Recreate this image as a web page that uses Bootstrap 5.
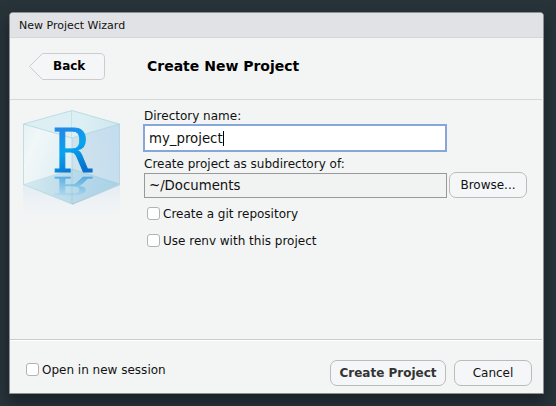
<!DOCTYPE html>
<html lang="en">
<head>
<meta charset="utf-8">
<meta name="viewport" content="width=device-width, initial-scale=1">
<title>New Project Wizard</title>
<link href="https://cdn.jsdelivr.net/npm/bootstrap@5.3.0/dist/css/bootstrap.min.css" rel="stylesheet">
<style>
body{background:#283339;font-family:"DejaVu Sans",sans-serif;font-size:12px;line-height:14px;color:#111;height:406px;overflow:hidden;padding:12px 12px 12px 9px}
.wizard{width:535px;height:382px;border:1px solid #8c9092;border-radius:4px 4px 0 0;background:#f3f5f5;box-shadow:0 8px 14px rgba(10,14,24,.5);overflow:hidden}
.wizard-title{height:25px;background:#e1e2e6;border-bottom:1px solid #d4d6d8;font-size:11px;padding:1px 0 0 9px}
.wizard-head{height:62px;border-bottom:1px solid #d4d6d8;margin-right:1px}
.back-btn{width:76px;height:27px;margin:-5px 0 0 19px;padding:0;border:0;background:none;color:#000}
.back-btn span{left:24px;top:6px;line-height:14px}
.wizard-head h1{font-size:14px;line-height:18px;margin:-5px 0 0 42px;color:#000}
.wizard-body{height:239px}
.art{width:125px;height:135px}
.fields{padding:8px 0 0 9px}
.fields label{line-height:16px}
.field{border-radius:0;width:303px;height:25px;border:1px solid #999;background:#f1f3f3;font-size:13.3px;line-height:16px;padding:1px 4px 0;color:#111}
.field-active{width:304px;height:28px;margin-left:-1px;border:2px solid #87a7dc;background:#fff}
.caret{width:1px;height:15px;background:#000}
.push{height:26px;border:1px solid #bbb;border-radius:7px;background:#f5f6f8;font-size:12px;line-height:14px;padding:0;color:#111}
.form-check-input.tick{width:13px;height:13px;margin:0;border:1px solid #b3b3b3;border-radius:3px;background-color:#fff}
.wizard-foot{height:54px;border-top:1px solid #ccc;box-shadow:inset 0 1px #fff;padding:20px 10px 0 16px;margin-right:1px}
#browse{width:78px;margin-left:2px}
#create{width:116px;color:#333}
#cancel{width:78px;margin-left:8px}
.options{margin:2px 0 0 3px}
.opt{gap:3px;height:27px}
.session{gap:3px;height:19px}
</style>
</head>
<body>
<main class="wizard d-flex flex-column">
  <div class="wizard-title d-flex align-items-center flex-shrink-0">New Project Wizard</div>
  <header class="wizard-head d-flex align-items-center flex-shrink-0">
    <button class="back-btn position-relative flex-shrink-0 fw-bold">
      <svg class="d-block" width="76" height="27" viewBox="0 0 76 27"><path d="M.5 13.500 13.500.5H71Q75.500.5 75.500 5V22Q75.500 26.500 71 26.500H13.500Z" fill="#f5f6f8" stroke="#ccc"/></svg>
      <span class="position-absolute">Back</span>
    </button>
    <h1 class="fw-bold">Create New Project</h1>
  </header>
  <section class="wizard-body d-flex flex-shrink-0">
    <svg class="art flex-shrink-0" viewBox="0 0 125 135" aria-hidden="true">
      <defs>
        <linearGradient id="left" x1="0" x2="1" y1="0" y2=".5"><stop stop-color="#e4f1f5"/><stop offset=".3" stop-color="#f2f7f8"/><stop offset="1" stop-color="#deeff4"/></linearGradient>
        <linearGradient id="right" x1="0" x2="1" y1=".3" y2="0"><stop stop-color="#d0e3ed"/><stop offset="1" stop-color="#c2dcef"/></linearGradient>
        <linearGradient id="top" x1="0" x2="1"><stop stop-color="#deeff3"/><stop offset=".6" stop-color="#dceff4"/><stop offset="1" stop-color="#cfe7ef"/></linearGradient>
        <linearGradient id="floor" x1="0" x2="1"><stop stop-color="#d7eaf0"/><stop offset=".5" stop-color="#b9dbea"/><stop offset="1" stop-color="#a9d1e7"/></linearGradient>
        <linearGradient id="ink" x1=".2" x2=".5" y1="0" y2="1"><stop offset=".18" stop-color="#2189e6"/><stop offset=".5" stop-color="#08a3ef"/><stop offset=".85" stop-color="#0670cd"/></linearGradient>
        <linearGradient id="echo" x1="0" x2="0" y1="77" y2="95" gradientUnits="userSpaceOnUse"><stop stop-color="#fff"/><stop offset="1" stop-color="#fff" stop-opacity=".15"/></linearGradient>
        <linearGradient id="mist" x1="0" x2="0" y1="80" y2="119" gradientUnits="userSpaceOnUse"><stop stop-color="#d9e8f2" stop-opacity=".8"/><stop offset="1" stop-color="#e9eff6" stop-opacity="0"/></linearGradient>
        <mask id="fade" maskUnits="userSpaceOnUse" x="0" y="70" width="125" height="30"><path d="M0 76H125V98H0Z" fill="url(#echo)"/></mask>
      </defs>
      <path d="M13 85 62 104 110 85V121H13Z" fill="url(#mist)"/>
      <path d="M13.500 24 62 38V69L13.500 84.500Z" fill="url(#left)"/>
      <path d="M62 38 109.500 24V84L62 69Z" fill="url(#right)"/>
      <path d="M13.500 24 62 10.500 109.500 24 62 38Z" fill="url(#top)"/>
      <path d="M13.500 84.500 62 69 109.500 84 62 104Z" fill="url(#floor)"/>
      <g fill="none" stroke="#94c8ce" stroke-opacity=".65" stroke-width=".8">
        <path d="M13.500 84.500V24L62 10.500 109.500 24V84L62 104ZM13.500 24 62 38 109.500 24M62 38V104"/>
        <path d="M61.500 11V38" stroke-opacity=".4"/>
        <path d="M13.500 84.500 62 69" stroke-opacity=".25"/>
        <path d="M62 69 109.500 84" stroke="#8fbfdc"/>
      </g>
      <path d="M62 104.500 110 84.700" stroke="#9dbad0" stroke-opacity=".6" fill="none"/>
      <g font-family="'DejaVu Serif',serif" font-size="59" fill="url(#ink)">
        <text id="glyph" transform="translate(42.300 71.500) scale(.87 1)" stroke="url(#ink)" stroke-width=".9">R</text>
      </g>
      <g mask="url(#fade)" opacity=".6"><use href="#glyph" transform="matrix(1 0 0 -.41 0 106.700)" font-family="'DejaVu Serif',serif" font-size="59" fill="#1e93de"/></g>
    </svg>
    <div class="fields d-flex flex-column">
      <label for="dir">Directory name:</label>
      <div id="dir" class="field field-active d-flex align-items-center"><span>my_project</span><i class="caret"></i></div>
      <label class="mt-1">Create project as subdirectory of:</label>
      <div class="d-flex align-items-center">
        <div class="field d-flex align-items-center">~/Documents</div>
        <button class="push btn" id="browse">Browse...</button>
      </div>
      <div class="options">
        <div class="opt d-flex align-items-center"><input class="form-check-input tick" type="checkbox" id="git"><label for="git">Create a git repository</label></div>
        <div class="opt d-flex align-items-center"><input class="form-check-input tick" type="checkbox" id="renv"><label for="renv">Use renv with this project</label></div>
      </div>
    </div>
  </section>
  <footer class="wizard-foot d-flex align-items-start flex-shrink-0">
    <div class="d-flex align-items-center session"><input class="form-check-input tick" type="checkbox" id="session"><label for="session">Open in new session</label></div>
    <button class="push btn fw-bold ms-auto" id="create">Create Project</button>
    <button class="push btn" id="cancel">Cancel</button>
  </footer>
</main>
<script src="https://cdn.jsdelivr.net/npm/bootstrap@5.3.0/dist/js/bootstrap.bundle.min.js"></script>
</body>
</html>
